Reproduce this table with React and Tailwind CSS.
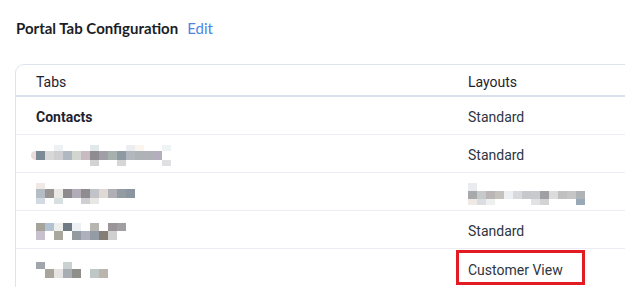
import React from "react";

// Pixelated (redacted) labels: each row is a strip of 9px cells.
const Pix = ({ rows, lead }) => (
  <div className="flex items-center">
    {lead && <span className={lead.cls} />}
    <div className="flex flex-col">
      {rows.map((r, i) => (
        <div key={i} className={`flex ${r.h}`}>
          {r.c.map((col, j) => (
            <span
              key={j}
              className="w-[9px] h-full shrink-0"
              style={{ background: col || "transparent" }}
            />
          ))}
        </div>
      ))}
    </div>
  </div>
);

const _ = "";

const maskA = {
  lead: { cls: "w-[5px] h-[9px] rounded-l-full bg-[#e9dcd9]" },
  rows: [
    { h: "h-[6px]", c: [_, _, "#edf1f4", _, _, _, "#e2e9ed", _, _, _, "#ecedf0", "#faf6ef", _, _, "#eef3f6"] },
    { h: "h-[9px]", c: ["#7b8a94", "#d8d8d8", "#cfcfd1", "#b0b8c2", "#d3d6d0", "#c8bcc2", "#8f8b90", "#a09fa7", "#a6b0ad", "#8e9aa2", "#b2b6bd", "#aeb3b6", "#b1b2b8", "#b5aebd", _] },
    { h: "h-[6px]", c: [_, _, _, _, _, _, "#d3d3d3", _, _, "#d6d6d6", _, _, _, _, "#e0dfe2"] },
  ],
};

const maskB = {
  rows: [
    { h: "h-[6px]", c: ["#efe8e5"] },
    { h: "h-[9px]", c: ["#b5bcc4", "#9a9592", "#e9e8e5", "#8f8a8e", "#b0adb9", "#8f8b8f", "#c2c2c9", "#dedad3", "#b1afb6", "#939ba2", "#8a959f"] },
    { h: "h-[6px]", c: ["#d3d9e0", _, "#d8dfe1", _, _, "#cfcfd3", "#e8e7e4"] },
  ],
};

const maskC = {
  rows: [
    { h: "h-[8px]", c: ["#a5a49a", "#b3c2d2", "#eeeeec", "#6f7a84", "#edf1f5", _, "#b7b6b1", _, "#9b9599", "#a19fa0"] },
    { h: "h-[9px]", c: ["#c8c0cc", _, "#a9a89e", _, "#939ba0", "#aeb0bc", "#939ca5", "#847e77", "#d0d0d0", _] },
  ],
};

const maskD = {
  rows: [
    { h: "h-[7px]", c: ["#a0a6ab", _, _, "#c9d1d3"] },
    { h: "h-[9px]", c: [_, "#a9a59c", "#e5e4e2", "#a7adb2", "#8f8f8a", _, "#bfc7c6", "#bbb6ad"] },
  ],
};

const maskE = {
  rows: [
    { h: "h-[8px]", c: ["#e9ebef"] },
    { h: "h-[8px]", c: ["#a7a9aa", "#c6cacb", "#bcb5b5", "#c5c2be", "#edf0f3", "#d8d9dc", "#c6c8ce", "#c9cace", "#a0a0a4", "#dcdcdc", "#c0c0c0", "#c6c6c6", "#b0b3b6"] },
    { h: "h-[6px]", c: ["#efe9e3", "#dcdde3", "#eef0f0", _, _, _, _, "#e2e2e4", "#d3d3d3", _, _, _, "#9aa9b8"] },
  ],
};

const rows = [
  { tab: <span className="font-bold text-[#1e2230]">Contacts</span>, layout: "Standard" },
  { tab: <Pix {...maskA} />, tabCls: "pl-[15px]", layout: "Standard" },
  { tab: <Pix {...maskB} />, layout: <Pix {...maskE} /> },
  { tab: <Pix {...maskC} />, layout: "Standard" },
  { tab: <Pix {...maskD} />, layout: "Customer View", marked: true },
];

export default function App() {
  return (
    <div className="w-[625px] h-[288px] overflow-hidden bg-white font-['Roboto',sans-serif] text-[14px] text-[#2f3441]">
      <div className="pl-[16px] pt-[18px] flex items-center gap-[9px] font-['Lato',sans-serif] text-[15px] leading-[20px]">
        <span className="font-bold text-[#1c1d26]">Portal Tab Configuration</span>
        <span className="text-[#4d84e6]">Edit</span>
      </div>

      <div className="ml-[15px] mt-[26px] w-[680px] border-t border-l border-[#dde4ee] rounded-tl-[9px]">
        <div className="grid grid-cols-[432px_1fr] h-[32px] pt-[4px] items-center border-b-2 border-[#d9e1ec] text-[#1e2230]">
          <div className="pl-[20px]">Tabs</div>
          <div className="pl-[20px]">Layouts</div>
        </div>
        {rows.map((r, i) => (
          <div
            key={i}
            className={`grid grid-cols-[432px_1fr] h-[38px] pt-[4px] items-center ${i < rows.length - 1 ? "border-b border-[#ecedf4]" : ""}`}
          >
            <div className={r.tabCls || "pl-[20px]"}>{r.tab}</div>
            <div className="pl-[20px] relative">
              {r.layout}
              {r.marked && (
                <span className="absolute left-[8px] top-[-10px] w-[129px] h-[35px] border-[3px] border-[#e31b23]" />
              )}
            </div>
          </div>
        ))}
      </div>
    </div>
  );
}
